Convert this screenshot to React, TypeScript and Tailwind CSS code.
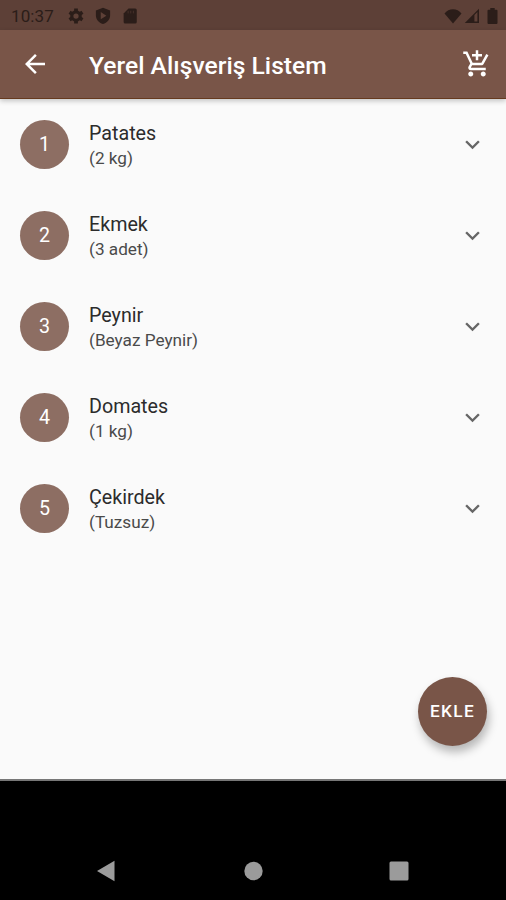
import type { ReactNode } from "react";
import { MdAddShoppingCart, MdArrowBack, MdExpandMore } from "react-icons/md";

const items = [
  { name: "Patates", detail: "(2 kg)" },
  { name: "Ekmek", detail: "(3 adet)" },
  { name: "Peynir", detail: "(Beyaz Peynir)" },
  { name: "Domates", detail: "(1 kg)" },
  { name: "Çekirdek", detail: "(Tuzsuz)" },
];

const gearTeeth = [0, 60, 120];

function StatusBar() {
  return (
    <div className="flex h-[30px] items-center bg-[#5d4037] pt-px pr-[8px] pl-[11px] text-[#2b1d19]">
      <span className="w-[56px] pt-px text-[17px] leading-none tracking-[0.1px]">10:37</span>
      <svg width="18" height="18" viewBox="0 0 24 24" fill="none" stroke="currentColor">
        <circle cx="12" cy="12" r="5.6" strokeWidth="4.2" />
        {gearTeeth.map((deg) => (
          <path key={deg} d="M12 2v3.5M12 18.5V22" strokeWidth="5" transform={`rotate(${deg} 12 12)`} />
        ))}
      </svg>
      <svg className="ml-[9px]" width="18" height="18" viewBox="0 0 24 24" fill="currentColor">
        <path fillRule="evenodd" d="M12 1 2.5 4.5V11c0 5.6 3.800 10 9.500 11.800 5.700-1.800 9.500-6.200 9.500-11.800V4.500zM9 6.800l7.500 4.700L9 16.200z" />
      </svg>
      <svg className="ml-[9px]" width="18" height="18" viewBox="0 0 24 24" fill="currentColor">
        <path d="M19 2h-9L3.500 8.500V20q0 2 2 2H19q2 0 2-2V4q0-2-2-2z" />
        <path d="M9.500 5v3.500M13 5v3.500M16.500 5v3.500" stroke="#46302a" strokeWidth="1.3" />
      </svg>
      <div className="ml-auto flex items-center">
        <svg width="18" height="16" viewBox="0 0 18 16" fill="currentColor">
          <path d="M9 15.5.5 5.5C4.5-.3 13.5-.3 17.5 5.5z" />
        </svg>
        <svg className="ml-[2px]" width="16" height="16" viewBox="0 0 16 16" fill="currentColor">
          <path fillRule="evenodd" d="M15 .8V15H.8zM10.400 7V13.500h3V4z" />
        </svg>
        <svg className="ml-[7px]" width="11" height="16" viewBox="0 0 11 16" fill="currentColor">
          <path d="M3.300 0h4.400v1.700H9.500q1 0 1 1V15q0 1-1 1h-8q-1 0-1-1V2.700q0-1 1-1h1.800z" />
        </svg>
      </div>
    </div>
  );
}

function AppBar() {
  return (
    <header className="relative z-10 flex h-[69px] items-center border-b border-[#663a1f] bg-[#795548] pr-[14px] pl-5 text-white shadow-[0_2px_5px_rgba(0,0,0,0.22)]">
      <button aria-label="Geri">
        <MdArrowBack size={30} />
      </button>
      <h1 className="ml-[39px] pt-[5px] text-[24.6px] leading-none font-medium tracking-[0.03px]">
        Yerel Alışveriş Listem
      </h1>
      <button aria-label="Sepete ekle" className="ml-auto">
        <MdAddShoppingCart size={30} />
      </button>
    </header>
  );
}

function Row({ index, name, detail }: { index: number; name: string; detail: string }) {
  return (
    <li className="flex h-[91px] items-center pr-[19px] pl-5">
      <span className="flex size-[49px] items-center justify-center rounded-full bg-[#8d6e63] pt-px text-[19.7px] text-white">
        {index}
      </span>
      <div className="ml-5 pt-[2px] text-[#2c2c2c]">
        <p className="text-[19.7px] leading-[25px]">{name}</p>
        <p className="text-[17.2px] leading-[25px] text-[#4a4a4a]">{detail}</p>
      </div>
      <MdExpandMore className="ml-auto text-[#666]" size={29} />
    </li>
  );
}

function NavButton({ label, children }: { label: string; children: ReactNode }) {
  return (
    <button aria-label={label} className="flex w-[146px] justify-center">
      <svg width="22" height="22" viewBox="0 0 22 22" fill="#9b9b9b">
        {children}
      </svg>
    </button>
  );
}

export default function App() {
  return (
    <div className="flex h-[900px] w-[506px] flex-col overflow-hidden bg-black font-['Roboto',sans-serif]">
      <StatusBar />
      <AppBar />
      <main className="relative h-[682px] border-b-2 border-[#777] bg-[#fafafa]">
        <ul>
          {items.map((item, i) => (
            <Row key={item.name} index={i + 1} name={item.name} detail={item.detail} />
          ))}
        </ul>
        <button className="absolute right-[19px] bottom-[33px] flex size-[69px] items-center justify-center rounded-full bg-[#795548] pt-px text-[17.2px] font-medium tracking-[1.4px] text-white shadow-[2px_6px_10px_rgba(0,0,0,0.28)]">
          EKLE
        </button>
      </main>
      <nav className="mt-auto flex h-[58px] items-center justify-center">
        <NavButton label="Geri">
          <path d="M1 11 18.500.7v20.600z" />
        </NavButton>
        <NavButton label="Ana ekran">
          <circle cx="11.5" cy="11" r="9.2" />
        </NavButton>
        <NavButton label="Son uygulamalar">
          <rect x="1.5" y="1.5" width="19" height="19" rx="1.5" />
        </NavButton>
      </nav>
    </div>
  );
}
